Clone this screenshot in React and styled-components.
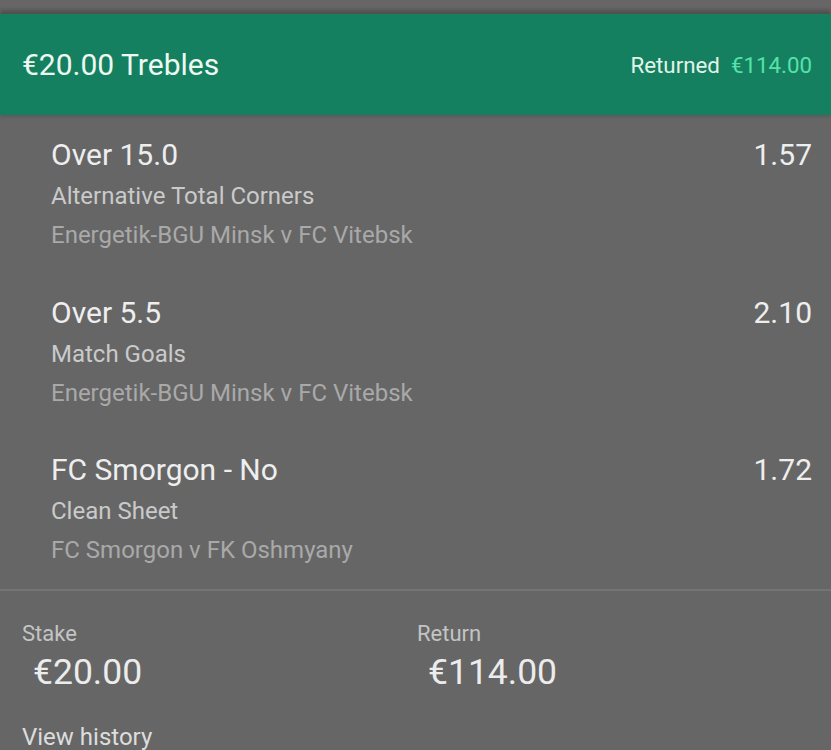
import React from "react";
import styled, { createGlobalStyle } from "styled-components";

const Global = createGlobalStyle`
  html, body { margin: 0; padding: 0; background: #666666; }
  body { font-family: Roboto, "Noto Sans", Arial, sans-serif; -webkit-font-smoothing: antialiased; }
`;

const Page = styled.div`
  width: 831px;
  height: 750px;
  overflow: hidden;
  background: #666666;
  padding-top: 14px;
  box-sizing: border-box;
`;

const Header = styled.header`
  height: 101px;
  background: #15805f;
  box-shadow: 0 -4px 4px rgba(0, 0, 0, 0.22), 0 2px 3px rgba(0, 0, 0, 0.12);
  display: flex;
  align-items: center;
  justify-content: space-between;
  padding: 0 19px 0 22px;
`;

const Title = styled.h1`
  margin: 0;
  font-size: 30px;
  font-weight: 400;
  color: #eef8f3;
`;

const Result = styled.div`
  display: flex;
  align-items: baseline;
  gap: 11px;
  font-size: 22.3px;
`;

const ResultLabel = styled.span`
  color: #e2f4ea;
`;

const ResultAmount = styled.span`
  color: #55e2a9;
`;

const Legs = styled.div`
  display: flex;
  flex-direction: column;
  gap: 40.5px;
  padding: 22px 19px 20px 51px;
`;

const Leg = styled.div`
  display: grid;
  grid-template-columns: 1fr auto;
`;

const LegInfo = styled.div`
  display: flex;
  flex-direction: column;
`;

const Selection = styled.div`
  font-size: 30px;
  line-height: 36px;
  color: #eeeeee;
`;

const Market = styled.div`
  margin-top: 3px;
  font-size: 24px;
  line-height: 40px;
  color: #cacaca;
`;

const Event = styled.div`
  font-size: 24px;
  line-height: 38px;
  color: #a9a9a9;
`;

const Odds = styled.div`
  font-size: 30px;
  line-height: 36px;
  color: #eeeeee;
`;

const Divider = styled.hr`
  margin: 0;
  border: none;
  height: 2px;
  background: #747474;
`;

const Summary = styled.div`
  display: grid;
  grid-template-columns: 1fr 1fr;
  padding: 32px 19px 0 22px;
`;

const Field = styled.div`
  display: flex;
  flex-direction: column;
`;

const FieldLabel = styled.div`
  font-size: 22px;
  line-height: 22px;
  color: #c4c4c4;
`;

const FieldValue = styled.div`
  font-size: 35.5px;
  line-height: 52px;
  margin-top: 1px;
  padding-left: 11px;
  color: #ececec;
`;

const HistoryLink = styled.a`
  display: block;
  padding: 25px 0 0 22px;
  font-size: 24px;
  line-height: 28px;
  color: #dddddd;
  text-decoration: none;
`;

const legs = [
  { sel: "Over 15.0", market: "Alternative Total Corners", event: "Energetik-BGU Minsk v FC Vitebsk", odds: "1.57" },
  { sel: "Over 5.5", market: "Match Goals", event: "Energetik-BGU Minsk v FC Vitebsk", odds: "2.10" },
  { sel: "FC Smorgon - No", market: "Clean Sheet", event: "FC Smorgon v FK Oshmyany", odds: "1.72" },
];

export default function App() {
  return (
    <Page>
      <Global />
      <Header>
        <Title>€20.00 Trebles</Title>
        <Result>
          <ResultLabel>Returned</ResultLabel>
          <ResultAmount>€114.00</ResultAmount>
        </Result>
      </Header>
      <Legs>
        {legs.map((l) => (
          <Leg key={l.sel}>
            <LegInfo>
              <Selection>{l.sel}</Selection>
              <Market>{l.market}</Market>
              <Event>{l.event}</Event>
            </LegInfo>
            <Odds>{l.odds}</Odds>
          </Leg>
        ))}
      </Legs>
      <Divider />
      <Summary>
        <Field>
          <FieldLabel>Stake</FieldLabel>
          <FieldValue>€20.00</FieldValue>
        </Field>
        <Field>
          <FieldLabel>Return</FieldLabel>
          <FieldValue>€114.00</FieldValue>
        </Field>
      </Summary>
      <HistoryLink href="#">View history</HistoryLink>
    </Page>
  );
}
